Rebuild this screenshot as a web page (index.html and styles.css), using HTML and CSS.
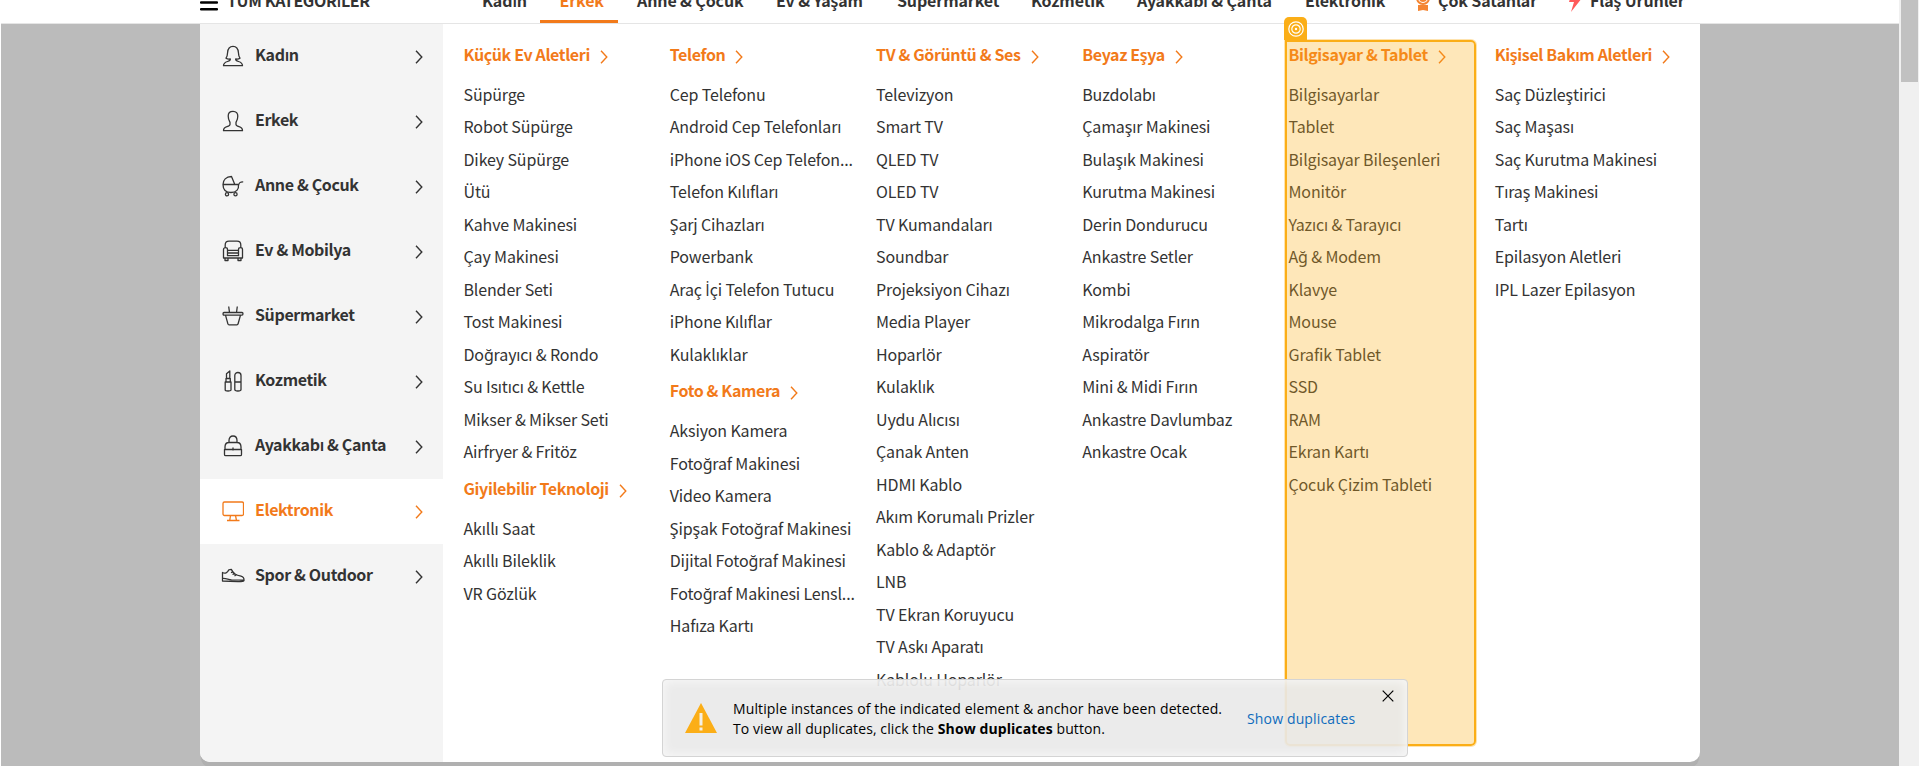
FILE: index.html
```html
<!DOCTYPE html>
<html lang="tr">
<head>
<meta charset="utf-8">
<title>Elektronik</title>
<link rel="stylesheet" href="styles.css">
</head>
<body>
<svg class="defs" width="0" height="0"><defs>
<symbol id="chev" viewBox="0 0 8 14"><path d="M1 .8 6.8 7 1 13.2"/></symbol>
</defs></svg>
<div class="page">
<header class="topbar">
<div class="all"><svg class="burger" viewBox="0 0 18 16"><path d="M1 1.5h16M1 7.5h16M1 14.3h16"/></svg><span>TÜM KATEGOR<i>İ</i>LER</span></div>
<nav class="nav">
<a class="n1">Kadın</a><a class="n2 on">Erkek</a><a class="n3">Anne &amp; Çocuk</a><a class="n4">Ev &amp; Yaşam</a><a class="n5">Süpermarket</a><a class="n6">Kozmetik</a><a class="n7">Ayakkabı &amp; Çanta</a><a class="n8">Elektronik</a><a class="n9"><svg class="medal" viewBox="0 0 16 22"><path class="mf" d="M3 16h10v6l-5-1-5 1z"/><circle cx="8" cy="9" r="6" /><circle cx="8" cy="9" r="3"/></svg>Çok Satanlar</a><a class="n10"><svg class="bolt" viewBox="0 0 14 24"><path d="M5 0 1 14h5L3 24 14 10H8l4-10z"/></svg>Flaş Ürünler</a>
</nav>
</header>
<main class="stage">
<div class="menu">
<aside class="side">
<a><svg class="ic" viewBox="0 0 22 22"><path d="M11 1.3C7 1.3 5.8 4.500 5.600 7.500c-.1 2.300-.4 4.100-1.600 5.700 1.300.9 2.700 1 4.300.7.400 1.500-.8 2-2.800 2.600C2.500 17.400 1.500 18.300 1.500 20.700h19c0-2.400-1-3.300-4-4.200-2-.6-3.200-1.100-2.800-2.600 1.600.3 3 .2 4.300-.7-1.200-1.600-1.500-3.400-1.600-5.700C16.200 4.500 15 1.300 11 1.300z"/></svg><span>Kadın</span><svg class="ch"><use href="#chev"/></svg></a>
<a><svg class="ic" viewBox="0 0 22 22"><path d="M11 1.300C7.700 1.300 6.200 3.300 6.200 6c0 3.400.6 4.200 1.800 6.300v2.200c0 1.200-1 1.500-3 2.100C2.200 17.400 1.500 18.300 1.500 20.700h19c0-2.400-.7-3.300-3.500-4.100-2-.6-3-.9-3-2.100v-2.200c1.200-2.100 1.800-2.900 1.800-6.300 0-2.700-1.500-4.700-4.800-4.700z"/></svg><span>Erkek</span><svg class="ch"><use href="#chev"/></svg></a>
<a><svg class="ic" viewBox="0 0 22 22"><path d="M1 9.500h15.500c.6 5-2.300 8-7.500 8S1 14.500 1 9.500C1 5 4 1.600 9.500 1.500l3.300 8M16.500 10.500c.5-3 1.500-3.800 4.700-3.700"/><circle cx="5" cy="19.300" r="1.600"/><circle cx="13.500" cy="19.300" r="1.600"/></svg><span>Anne &amp; Çocuk</span><svg class="ch"><use href="#chev"/></svg></a>
<a><svg class="ic" viewBox="0 0 22 22"><path d="M3.200 8V5c0-2.700 1.300-3.800 3.800-3.800h8c2.500 0 3.800 1.100 3.800 3.800v3M5.500 13V9.500C5.500 8.300 4.600 7.700 3.500 7.700S1.500 8.400 1.500 9.500V18h19V9.500c0-1.100-.9-1.800-2-1.800s-2 .6-2 1.800V13zM5.500 10.300h11M5.500 13v2.700h11V13M3 18.500v2h3v-2M16 18.500v2h3v-2"/></svg><span>Ev &amp; Mobilya</span><svg class="ch"><use href="#chev"/></svg></a>
<a><svg class="ic" viewBox="0 0 22 22"><path d="M2 7.500h18c1.300 0 1.300 2.700 0 2.700H2c-1.300 0-1.300-2.700 0-2.700zM3.500 10.200l2.400 8.600c.2.700.5 1 1.200 1h7.800c.7 0 1-.3 1.200-1l2.400-8.600M7.500 7.500 6.700 1.500M14.500 7.500l.8-6"/></svg><span>Süpermarket</span><svg class="ch"><use href="#chev"/></svg></a>
<a><svg class="ic" viewBox="0 0 22 22"><path d="M3.200 12v8c0 1.300 5.800 1.300 5.800 0v-8zM4 12V8.500h4.300V12M4.500 8.500V3.800L7.800 1v7.500M12.800 12V5.500c0-4 6.200-4 6.200 0V12zM12.800 12v7.500c0 2 6.200 2 6.200 0V12"/></svg><span>Kozmetik</span><svg class="ch"><use href="#chev"/></svg></a>
<a><svg class="ic" viewBox="0 0 22 22"><path d="M2.500 14.500v5c0 .8.400 1.200 1.200 1.200h14.600c.8 0 1.200-.4 1.200-1.200v-5zM3 14.500V12c0-2.800 1.300-4.500 4-4.500h8c2.700 0 4 1.700 4 4.500v2.500M7 7.500v-2C7 2.700 8.500 1 11 1s4 1.700 4 4.500v2M11 12.500v3"/></svg><span>Ayakkabı &amp; Çanta</span><svg class="ch"><use href="#chev"/></svg></a>
<a class="on"><svg class="ic" viewBox="0 0 22 22"><rect x="1" y="2" width="20.500" height="13.500" rx="1.500"/><path d="M8.500 15.500 7.800 20M13.500 15.500l.9 4.500M5 20.500h12.500"/></svg><span>Elektronik</span><svg class="ch"><use href="#chev"/></svg></a>
<a><svg class="ic shoe" viewBox="0 0 24 22"><path d="M1.500 7.500C4 9 6.500 8 7.800 4.800l2.500-.4c2.500 5 5.200 5.700 9.700 6.800 2.300.6 3.200 1.800 3 4.300-.8 1-3 1.300-6 1.200L1.500 16zM1.500 13.500c4-.3 5.500 1.200 9 1.400l12 .2M10 7.700l2.500-1M11.500 9.500l2.500-1.200M13.500 11l2.300-1.500"/></svg><span>Spor &amp; Outdoor</span><svg class="ch"><use href="#chev"/></svg></a>
</aside>
<section class="cols">
<div class="col">
<h3>Küçük Ev Aletleri<svg class="ch"><use href="#chev"/></svg></h3>
<a>Süpürge</a><a>Robot Süpürge</a><a>Dikey Süpürge</a><a>Ütü</a><a>Kahve Makinesi</a><a>Çay Makinesi</a><a>Blender Seti</a><a>Tost Makinesi</a><a>Doğrayıcı &amp; Rondo</a><a>Su Isıtıcı &amp; Kettle</a><a>Mikser &amp; Mikser Seti</a><a>Airfryer &amp; Fritöz</a>
<h3>Giyilebilir Teknoloji<svg class="ch"><use href="#chev"/></svg></h3>
<a>Akıllı Saat</a><a>Akıllı Bileklik</a><a>VR Gözlük</a>
</div>
<div class="col">
<h3>Telefon<svg class="ch"><use href="#chev"/></svg></h3>
<a>Cep Telefonu</a><a>Android Cep Telefonları</a><a>iPhone iOS Cep Telefon...</a><a>Telefon Kılıfları</a><a>Şarj Cihazları</a><a>Powerbank</a><a>Araç <i>İ</i>çi Telefon Tutucu</a><a>iPhone Kılıflar</a><a>Kulaklıklar</a>
<h3>Foto &amp; Kamera<svg class="ch"><use href="#chev"/></svg></h3>
<a>Aksiyon Kamera</a><a>Fotoğraf Makinesi</a><a>Video Kamera</a><a>Şipşak Fotoğraf Makinesi</a><a>Dijital Fotoğraf Makinesi</a><a>Fotoğraf Makinesi Lensl...</a><a>Hafıza Kartı</a>
</div>
<div class="col">
<h3>TV &amp; Görüntü &amp; Ses<svg class="ch"><use href="#chev"/></svg></h3>
<a>Televizyon</a><a>Smart TV</a><a>QLED TV</a><a>OLED TV</a><a>TV Kumandaları</a><a>Soundbar</a><a>Projeksiyon Cihazı</a><a>Media Player</a><a>Hoparlör</a><a>Kulaklık</a><a>Uydu Alıcısı</a><a>Çanak Anten</a><a>HDMI Kablo</a><a>Akım Korumalı Prizler</a><a>Kablo &amp; Adaptör</a><a>LNB</a><a>TV Ekran Koruyucu</a><a>TV Askı Aparatı</a><a>Kablolu Hoparlör</a>
</div>
<div class="col">
<h3>Beyaz Eşya<svg class="ch"><use href="#chev"/></svg></h3>
<a>Buzdolabı</a><a>Çamaşır Makinesi</a><a>Bulaşık Makinesi</a><a>Kurutma Makinesi</a><a>Derin Dondurucu</a><a>Ankastre Setler</a><a>Kombi</a><a>Mikrodalga Fırın</a><a>Aspiratör</a><a>Mini &amp; Midi Fırın</a><a>Ankastre Davlumbaz</a><a>Ankastre Ocak</a>
</div>
<div class="col">
<h3>Bilgisayar &amp; Tablet<svg class="ch"><use href="#chev"/></svg></h3>
<a>Bilgisayarlar</a><a>Tablet</a><a>Bilgisayar Bileşenleri</a><a>Monitör</a><a>Yazıcı &amp; Tarayıcı</a><a>Ağ &amp; Modem</a><a>Klavye</a><a>Mouse</a><a>Grafik Tablet</a><a>SSD</a><a>RAM</a><a>Ekran Kartı</a><a>Çocuk Çizim Tableti</a>
</div>
<div class="col">
<h3>Kişisel Bakım Aletleri<svg class="ch"><use href="#chev"/></svg></h3>
<a>Saç Düzleştirici</a><a>Saç Maşası</a><a>Saç Kurutma Makinesi</a><a>Tıraş Makinesi</a><a>Tartı</a><a>Epilasyon Aletleri</a><a>IPL Lazer Epilasyon</a>
</div>
</section>
</div>
</main>
</div>
<div class="scroll"><div class="thumb"></div></div>
<div class="mark"></div>
<div class="badge"><svg viewBox="0 0 16 16"><circle cx="8" cy="8" r="7.200"/><circle cx="8" cy="8" r="4.200"/><circle cx="8" cy="8" r="1.200" class="dot"/></svg></div>
<div class="toast">
<svg class="warn" viewBox="0 0 32 30"><path d="M16 0 32 30H0z"/><path class="ex" d="M14.500 10h3v12.500h-3zM14.500 24.500h3v3h-3z"/></svg>
<p><span class="l1">Multiple instances of the indicated element &amp; anchor have been detected.</span><br><span class="l2">To view all duplicates, click the <b>Show duplicates</b> button.</span></p>
<a>Show duplicates</a>
<svg class="x" viewBox="0 0 12 12"><path d="M.7.7l10.600 10.600M11.300.7.7 11.300"/></svg>
</div>
</body>
</html>
```
FILE: styles.css
```css
* { box-sizing: border-box; }
body { margin: 0; width: 1920px; height: 766px; overflow: hidden; display: flex; background: #fff; position: relative; font-family: "Noto Sans CJK JP", "Noto Sans", sans-serif; font-size: 16px; color: #333; }
.defs { position: absolute; }
svg { fill: none; stroke: currentColor; flex: none; }
i { font-style: normal; font-family: "Open Sans", "Noto Sans", sans-serif; line-height: 0; }
.page { width: 1899px; height: 766px; display: flex; flex-direction: column; padding-left: 1px; }
.topbar { height: 24px; flex: none; border-bottom: 1px solid #e5e5e5; display: flex; padding-left: 199px; overflow: hidden; font-weight: 600; white-space: nowrap; letter-spacing: -.12px; }
.all { width: 252px; height: 23px; display: flex; color: #333; letter-spacing: -.38px; }
.all span { line-height: 24px; margin-top: -12px; margin-left: 9px; }
.burger { width: 18px; height: 16px; margin-top: -5px; stroke: #000; stroke-width: 2.400; stroke-linecap: round; }
.nav { display: flex; height: 23px; }
.nav a { height: 35px; line-height: 24px; display: flex; flex: none; padding-left: 30px; margin-top: -12px; }
.n1 { width: 88px; } .n2 { width: 78px; } .n3 { width: 128px; } .n4 { width: 121px; } .n5 { width: 134px; }
.n6 { width: 106px; } .n7 { width: 168px; } .n8 { width: 140px; } .n9 { width: 153px; } .n10 { width: 140px; }
.nav a.n2 { padding-left: 19.500px; } .nav a.n3 { padding-left: 19px; }
.nav a.n9 { padding-left: 0; } .nav a.n10 { padding-left: 0; }
.nav .on { color: #f27a1a; border-bottom: 3px solid #f27a1a; }
.medal { width: 16px; height: 22px; margin-top: 1px; margin-right: 7px; color: #f48532; stroke-width: 2; }
.mf { fill: #f48532; stroke: none; }
.bolt { width: 14px; height: 24px; margin-right: 8px; }
.bolt path { fill: #ff5a5a; stroke: none; }
.stage { flex: 1; background: #bbb; padding-left: 199px; }
.menu { width: 1500px; height: 738px; display: flex; background: #fff; overflow: hidden; border-radius: 0 0 10px 10px; box-shadow: 0 6px 0 -1px #b0b0b0; }
.side { width: 243px; background: #f4f4f4; font-weight: 600; flex: none; letter-spacing: -.36px; }
.side a { height: 65px; display: flex; padding-left: 22px; align-items: flex-start; }
.side a span { line-height: 60px; width: 162px; white-space: nowrap; }
.side a.on { background: #fff; color: #f27a1a; }
.ic { width: 22px; height: 22px; margin: 21px 11px 0 0; stroke-width: 1.300; stroke-linejoin: round; }
.shoe { width: 24px; margin: 21px 10px 0 -1px; }
.ch { width: 8px; height: 14px; stroke-width: 1.400; }
.side .ch { margin-top: 26px; margin-left: -2px; }
.cols { display: grid; grid-template-columns: repeat(6, 206.250px); padding: 9.500px 0 0 20.500px; }
.col { display: flex; flex-direction: column; white-space: nowrap; }
.col a { line-height: 32px; height: 32.500px; letter-spacing: -.14px; }
h3 { margin: 0; font-size: 16px; font-weight: 600; color: #f27a1a; line-height: 41.600px; height: 44px; display: flex; letter-spacing: -.37px; }
h3 .ch { margin: 16px 0 0 10px; }
.scroll { width: 20px; height: 766px; background: #f0f0f0; padding-left: 2px; }
.thumb { width: 17px; height: 82px; background: #c1c1c1; }
.mark { position: absolute; left: 1285px; top: 40px; width: 191px; height: 706px; border: 2px solid #fbae17; background: rgba(251,174,23,.3); border-radius: 0 5px 5px 5px; box-shadow: 0 0 0 1px rgba(251,174,23,.35); }
.badge { position: absolute; left: 1284px; top: 17px; width: 23px; height: 23px; background: #fbae17; border-radius: 5px 5px 0 0; display: flex; align-items: center; justify-content: center; }
.badge svg { width: 16px; height: 16px; stroke: #fff; stroke-width: 1.200; }
.badge .dot { fill: #fff; stroke: none; }
.toast { position: absolute; left: 662px; top: 679px; width: 746px; height: 78px; display: flex; background: rgba(233,233,233,.9); border: 1px solid #d4d4d4; border-radius: 4px; box-shadow: inset 0 0 10px 2px rgba(255,255,255,.6); color: #000; font-family: "Open Sans", "Noto Sans", sans-serif; font-size: 14px; white-space: nowrap; }
.warn { width: 32px; height: 30px; margin: 23px 16px 0 22px; }
.warn path { fill: #fbae17; stroke: none; }
.warn .ex { fill: #f4f0e6; }
.toast p { margin: 19px 0 0; line-height: 20px; width: 514px; }
.l1 { letter-spacing: .12px; }
.l2 { letter-spacing: .09px; }
.toast a { color: #0f6cbd; line-height: 20px; margin-top: 29px; width: 135px; letter-spacing: .15px; }
.x { width: 12px; height: 12px; margin-top: 10px; stroke-width: 1.200; }
```
